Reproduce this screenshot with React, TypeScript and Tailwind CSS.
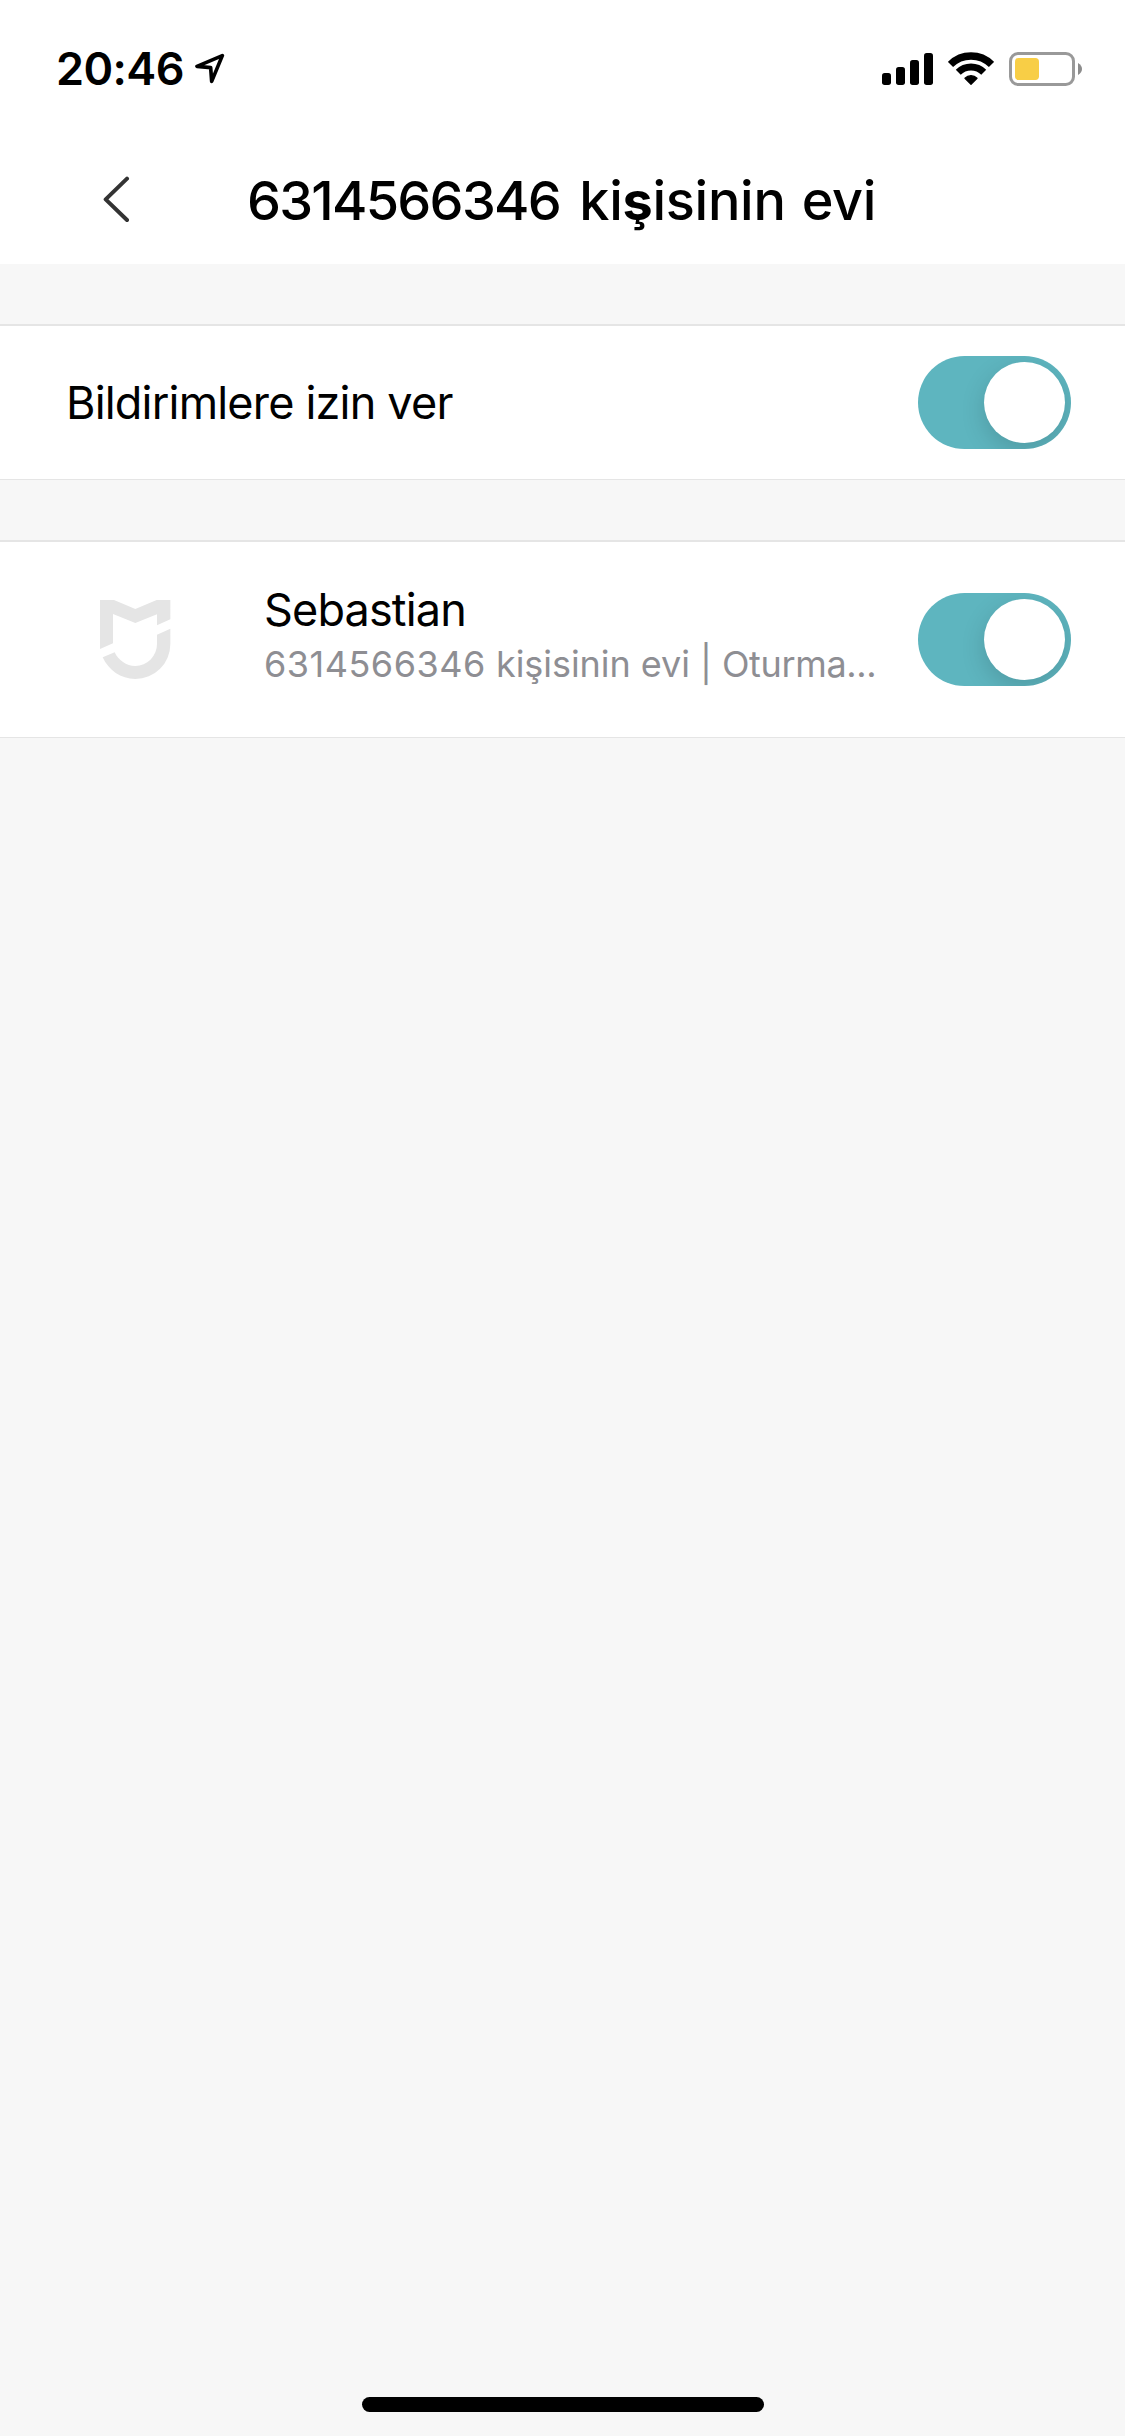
import React, { useState } from 'react';

const StatusBar: React.FC = () => {
  return (
    <div className="flex items-start justify-between h-[132px] pl-[56px] pr-[43px]">
      <div className="flex items-start">
        <span className="mt-[39px] w-[139px] text-[45px] leading-[60px] font-semibold tracking-[-0.6px] whitespace-nowrap">
          20:46
        </span>
        <svg className="mt-[53px] w-[30px] h-[31px]" viewBox="464 69 90 93" fill="none">
          <path
            d="M546 77L470 109L511 113L514 154Z"
            stroke="#000"
            strokeWidth="11"
            strokeLinejoin="round"
          />
        </svg>
      </div>
      <div className="flex mt-[52px]">
        <svg className="w-[51px] h-[34px]" viewBox="66 66 153 102">
          <rect x="66" y="129" width="27" height="36" rx="8" />
          <rect x="108" y="111" width="27" height="54" rx="8" />
          <rect x="150" y="90" width="27" height="75" rx="8" />
          <rect x="192" y="69" width="27" height="96" rx="8" />
        </svg>
        <svg className="ml-[15px] w-[46px] h-[34px]" viewBox="264 66 138 102" fill="none">
          <path d="M271.5 103.5A87 87 0 0 1 394.5 103.5" stroke="#000" strokeWidth="22" />
          <path d="M294.8 126.8A54 54 0 0 1 371.2 126.8" stroke="#000" strokeWidth="21" />
          <path
            d="M333 163L315 145A25 25 0 0 1 351 145Z"
            fill="#000"
            stroke="#000"
            strokeWidth="4"
            strokeLinejoin="round"
          />
        </svg>
        <svg className="ml-[15px] w-[73px] h-[34px]" viewBox="447 66 219 102">
          <rect x="451.5" y="70.5" width="189" height="93" rx="23" fill="none" stroke="#999" strokeWidth="9" />
          <rect x="465" y="84" width="72" height="66" rx="11" fill="#f8ce46" />
          <path d="M654 99Q666 106 666 117Q666 128 654 135Z" fill="#8c8c8c" />
        </svg>
      </div>
    </div>
  );
};

const Header: React.FC = () => {
  return (
    <div className="flex items-center h-[132px] pl-[103px] pb-px">
      <svg className="w-[27px] h-[47px] mt-[3px]" viewBox="70 78 81 141" fill="none">
        <path
          d="M142 86L78 148L142 210"
          stroke="#333"
          strokeWidth="12"
          strokeLinecap="round"
          strokeLinejoin="round"
        />
      </svg>
      <h1 className="ml-[117px] mt-[7px] text-[54px] leading-[72px] font-medium whitespace-nowrap">
        <span className="tracking-[-1.75px]">6314566346</span>{' '}
        <span className="ml-[5px] tracking-[-0.3px] [word-spacing:2px]">
          ki<span className="font-bold">ş</span>isinin evi
        </span>
      </h1>
    </div>
  );
};

const Switch: React.FC = () => {
  const [on, setOn] = useState(true);

  return (
    <button
      type="button"
      role="switch"
      aria-checked={on}
      onClick={() => setOn(!on)}
      className={`flex shrink-0 w-[153px] h-[93px] p-[6px] rounded-full overflow-hidden ${
        on ? 'justify-end bg-[#5eb5bf]' : 'justify-start bg-[#e5e5e5]'
      }`}
    >
      <span className="w-[81px] h-[81px] rounded-full bg-white shadow-[0_8px_24px_rgba(0,0,0,0.15)]" />
    </button>
  );
};

const MiLogo: React.FC = () => {
  return (
    <svg className="w-[71px] h-[79px]" viewBox="60 210 213 237" fill="#e5e5e5">
      <path d="M60 210H102L166 237L230 210H271V268L231 286V253L166 279L99 252V340L60 357Z" />
      <path d="M271 296V342A105 105 0 0 1 166 447C122 447 86 421 68 382L104 367C115 391 139 408 166 408A66 66 0 0 0 231 342V314Z" />
    </svg>
  );
};

const App: React.FC = () => {
  return (
    <div className="flex flex-col w-[1125px] h-[2436px] bg-[#f7f7f7] text-black font-[Inter,sans-serif]">
      <header className="bg-white">
        <StatusBar />
        <Header />
      </header>

      <section className="flex items-center justify-between h-[156px] mt-[60px] pl-[66px] pr-[54px] bg-white border-t-2 border-b border-[#e5e5e5]">
        <span className="text-[45px] leading-[60px] tracking-[-0.8px] whitespace-nowrap">
          Bildirimlere izin ver
        </span>
        <Switch />
      </section>

      <section className="flex items-start h-[198px] mt-[60px] pl-[100px] pr-[54px] bg-white border-t-2 border-b border-[#e5e5e5]">
        <div className="mt-[58px]">
          <MiLogo />
        </div>
        <div className="flex-1 mt-[41px] ml-[93px] whitespace-nowrap">
          <p className="text-[45px] leading-[54px] tracking-[-0.85px]">Sebastian</p>
          <p className="text-[36px] leading-[55px] text-[#8e8e93]">
            <span className="tracking-[0.5px]">6314566346</span>{' '}
            <span className="tracking-[-0.05px]">kişisinin evi | </span>
            <span className="tracking-[-0.35px]">Oturma...</span>
          </p>
        </div>
        <div className="mt-[51px]">
          <Switch />
        </div>
      </section>

      <div className="mt-auto mb-[24px] ml-[362px] w-[402px] h-[15px] rounded-full bg-black" />
    </div>
  );
};

export default App;
